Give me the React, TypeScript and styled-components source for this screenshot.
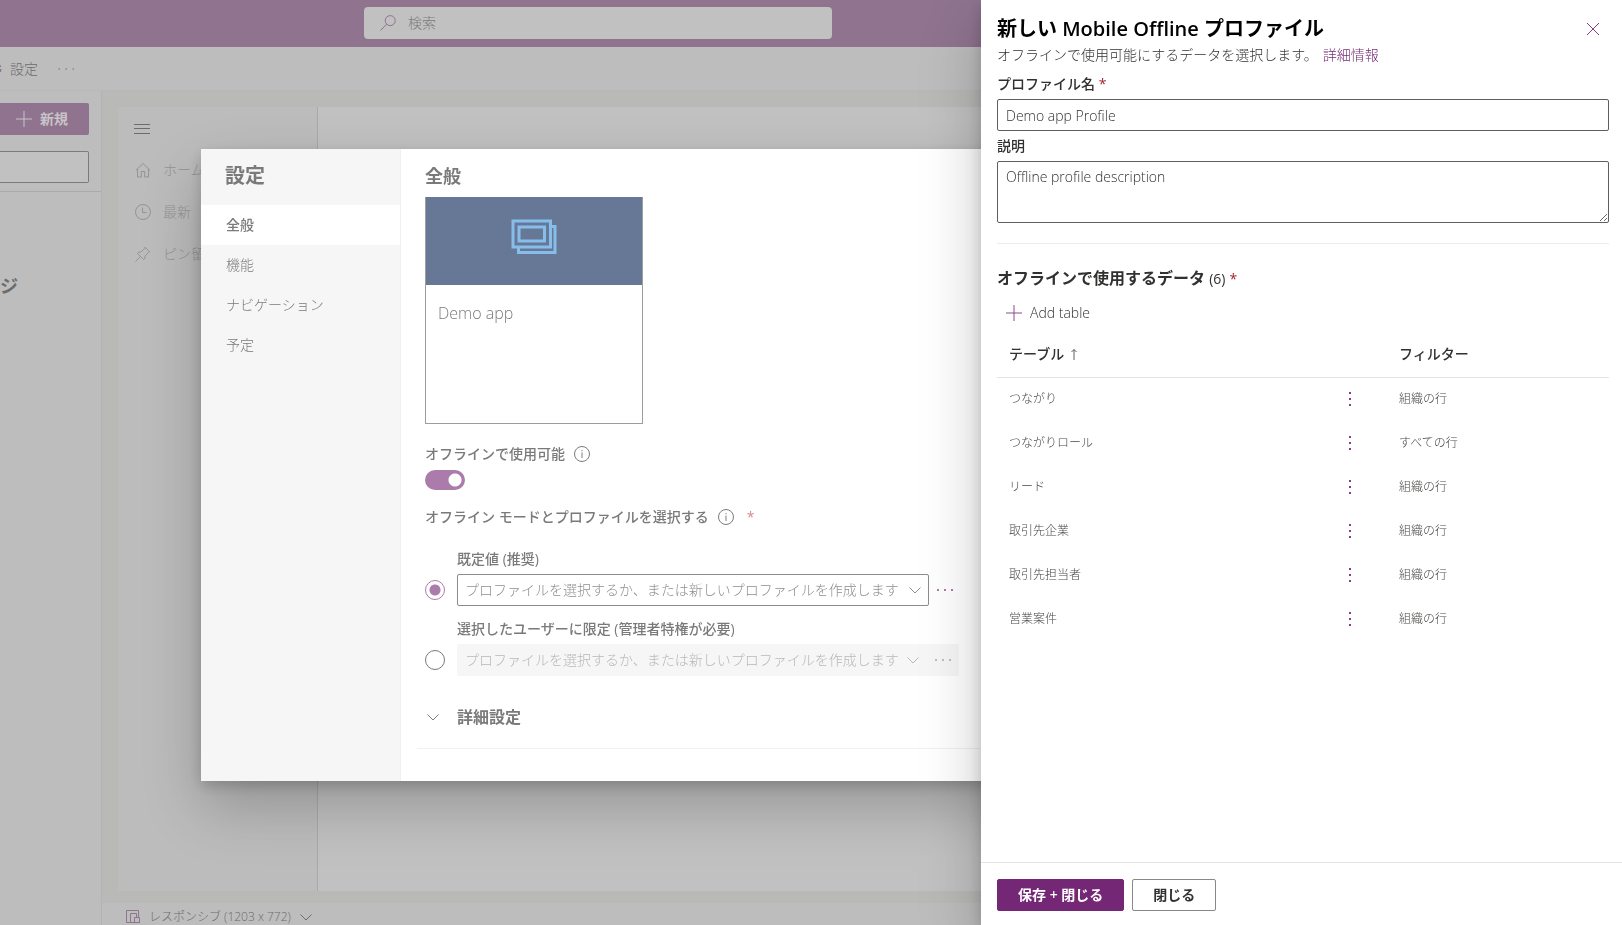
import React from "react";
import styled, { createGlobalStyle, css } from "styled-components";

const font = `"Open Sans", "Noto Sans CJK JP", sans-serif`;
const depth = "0 26px 58px rgba(0, 0, 0, 0.22), 0 5px 14px rgba(0, 0, 0, 0.18)";

const GlobalStyle = createGlobalStyle`
  *, *::before, *::after { box-sizing: border-box; }
  body { margin: 0; font-family: ${font}; font-size: 14px; font-weight: 300; line-height: 20px; color: #323130; overflow: hidden; }
  button, input, select, textarea { font: inherit; color: inherit; margin: 0; }
  button { cursor: pointer; }
  h1, h2, h3, p { margin: 0; }
`;

/* ---------- icons ---------- */

const Svg = styled.svg`
  display: block;
  flex: none;
  fill: none;
  stroke: currentColor;
`;

const SearchIcon = () => (
  <Svg width="16" height="16" viewBox="0 0 16 16">
    <circle cx="10.2" cy="5.6" r="5" />
    <path d="M6.6 9.2L.4 15.5" />
  </Svg>
);
const PlusIcon = () => (
  <Svg width="16" height="16" viewBox="0 0 16 16">
    <path d="M8 0v16M0 8h16" />
  </Svg>
);
const MenuIcon = () => (
  <Svg width="16" height="16" viewBox="0 0 16 16">
    <path d="M0 3.5h16M0 7.5h16M0 12.5h16" />
  </Svg>
);
const HomeIcon = () => (
  <Svg width="16" height="16" viewBox="0 0 16 16">
    <path d="M1 8.3L8 1.5l7 6.8M2.5 7v8h3.800V9.500h3.400V15h3.800V7" />
  </Svg>
);
const ClockIcon = () => (
  <Svg width="16" height="16" viewBox="0 0 16 16">
    <circle cx="8" cy="8" r="7.500" />
    <path d="M7.500 3.500v5h4" />
  </Svg>
);
const PinIcon = () => (
  <Svg width="16" height="16" viewBox="0 0 16 16">
    <path d="M10 1.200l4.800 4.800-1.300.5-3.300 3.300-.4 2.800-1.200 1L2.500 7.400l1-1.200 2.800-.4 3.300-3.300zM5.500 10.500L.5 15.500" />
  </Svg>
);
const DeviceIcon = () => (
  <Svg width="14" height="14" viewBox="0 0 14 14">
    <path d="M4.500 12.500h-4V.5h12v7M4.500 13V3.500h6v4M8.500 13V7.500h5V13M5 12.500h9" />
  </Svg>
);
const ChevronIcon = () => (
  <Svg width="12" height="12" viewBox="0 0 12 12">
    <path d="M.5 3.500L6 9l5.500-5.500" />
  </Svg>
);
const CloseIcon = () => (
  <Svg width="14" height="14" viewBox="0 0 14 14">
    <path d="M1 1l12 12M13 1L1 13" />
  </Svg>
);
const InfoIcon = () => (
  <Svg width="16" height="16" viewBox="0 0 16 16">
    <circle cx="8" cy="8" r="7.500" />
    <path d="M8 6.500V12M8 4v1.200" />
  </Svg>
);
const DotsIcon = () => (
  <Svg width="16" height="16" viewBox="0 0 16 16">
    <path d="M0 8h2M7 8h2M14 8h2" strokeWidth="2" />
  </Svg>
);
const VerticalDotsIcon = () => (
  <Svg width="16" height="16" viewBox="0 0 16 16">
    <path d="M8 1v2M8 7v2M8 13v2" strokeWidth="2" />
  </Svg>
);
const GearIcon = () => (
  <Svg width="16" height="16" viewBox="0 0 16 16">
    <circle cx="8" cy="8" r="2.500" />
    <circle cx="8" cy="8" r="6.500" strokeWidth="2" strokeDasharray="3 2" />
  </Svg>
);
const SortUpIcon = () => (
  <Svg width="8" height="14" viewBox="0 0 8 14">
    <path d="M4 13V2.500M1.500 5L4 2.500 6.500 5" />
  </Svg>
);
const AppTileIcon = () => (
  <Svg width="46" height="36" viewBox="0 0 46 36" strokeWidth="3">
    <path d="M2 2h37.500v26H2zM8 8h25.500v14H8zM39 7.500h5V33.500H7.500V28" />
  </Svg>
);

/* ---------- designer behind the dialogs ---------- */

const Shell = styled.div`
  height: 100vh;
  display: flex;
  flex-direction: column;
  overflow: hidden;
  background: #bdbdbd;
  color: #6c6c6c;
`;

const TopBar = styled.header`
  flex: none;
  height: 47px;
  padding: 7px 0 8px 364px;
  background: #8f738f;
`;

const SearchBox = styled.label`
  display: flex;
  align-items: center;
  gap: 12px;
  width: 468px;
  height: 32px;
  padding: 0 16px;
  border-radius: 4px;
  background: #c1c1c1;
  color: #8f738f;

  input {
    flex: 1;
    border: 0;
    padding: 0;
    background: none;
    outline: 0;
  }
  input::placeholder { color: #7c7c7c; opacity: 1; }
`;

const CommandBar = styled.div`
  flex: none;
  display: flex;
  align-items: center;
  gap: 20px;
  height: 44px;
  border-bottom: 1px solid #b8b8b8;
`;

const CommandButton = styled.button`
  display: flex;
  align-items: center;
  gap: 8px;
  border: 0;
  padding: 0;
  background: none;

  &:first-child { margin-left: -14px; }
  &:first-child svg { color: #8f738f; }
`;

const Workspace = styled.div`
  flex: 1;
  min-height: 0;
  display: flex;
`;

const PagesPane = styled.aside`
  flex: none;
  width: 102px;
  border-right: 1px solid #b3b3b3;
`;

const PagesTools = styled.div`
  display: flex;
  flex-direction: column;
  gap: 16px;
  padding: 12px 12px 8px 0;
  border-bottom: 1px solid #aaa;
`;

const NewButton = styled.button`
  display: flex;
  align-items: center;
  gap: 8px;
  height: 32px;
  border: 0;
  border-radius: 0 2px 2px 0;
  padding: 0 16px;
  background: #8f738f;
  color: #c8c4c8;
  font-weight: 600;
`;

const PagesFilter = styled.input`
  width: 100%;
  height: 32px;
  border: 1px solid #7b7b7b;
  border-left: 0;
  border-radius: 0 2px 2px 0;
  background: #c1c1c1;
`;

const PagesTitle = styled.h2`
  padding-top: 82px;
  font-size: 18px;
  line-height: 24px;
  font-weight: 600;
`;

const CanvasColumn = styled.main`
  flex: 1;
  min-width: 0;
  display: flex;
  flex-direction: column;
`;

const Canvas = styled.div`
  flex: 1;
  min-height: 0;
  display: flex;
  padding: 16px 16px 12px;
  background: #b9b9b7;
`;

const PreviewNav = styled.nav`
  flex: none;
  width: 200px;
  padding: 14px 16px;
  border-right: 1px solid #a9a9a9;
  background: #bcbcbc;
`;

const PreviewBody = styled.div`
  flex: 1;
  background: #c1c1c1;
`;

const PreviewLink = styled.a`
  display: flex;
  align-items: center;
  gap: 12px;
  height: 42px;
  padding-left: 1px;
  color: #949494;
  text-decoration: none;
`;

const MenuButton = styled.button`
  display: block;
  border: 0;
  padding: 0;
  margin-bottom: 12px;
  background: none;
`;

const StatusBar = styled.div`
  flex: none;
  height: 22px;
  padding: 5px 24px 0;
`;

const SizeButton = styled.button`
  display: flex;
  align-items: center;
  gap: 9px;
  border: 0;
  padding: 0;
  background: none;
  font-size: 12px;
  line-height: 17px;

  svg:first-child { color: #8f738f; }
`;

/* ---------- settings dialog ---------- */

const ModalLayer = styled.div`
  position: fixed;
  inset: 0;
  display: flex;
  align-items: center;
  justify-content: center;
  padding-top: 5px;
`;

const Modal = styled.section`
  display: flex;
  width: 1220px;
  height: 632px;
  border-radius: 2px;
  background: #fff;
  color: #7a7a7a;
  box-shadow: ${depth};
`;

const ModalNav = styled.nav`
  flex: none;
  width: 200px;
  border-right: 1px solid #f0f0f0;
  background: #f6f6f6;

  h2 {
    padding: 13px 24px 15px;
    font-size: 20px;
    line-height: 28px;
    font-weight: 600;
  }
`;

const ModalTab = styled.button<{ $active?: boolean }>`
  display: block;
  width: 100%;
  height: 40px;
  border: 0;
  padding: 0 25px;
  text-align: left;
  background: ${(p) => (p.$active ? "#fff" : "none")};
  font-weight: ${(p) => (p.$active ? 500 : 300)};
`;

const ModalBody = styled.div`
  flex: 1;
  padding: 13px 16px;

  h2 {
    padding: 0 8px;
    font-size: 18px;
    line-height: 28px;
    font-weight: 600;
  }
`;

const AppCard = styled.div`
  width: 218px;
  height: 227px;
  margin: 7px 8px 20px;
  border: 1px solid #9c9c9c;
  border-top: 0;
`;

const AppCardTop = styled.div`
  display: flex;
  justify-content: center;
  height: 88px;
  padding-top: 22px;
  background: #667896;
  color: #86bdea;
`;

const AppCardName = styled.p`
  padding: 18px 12px;
  font-size: 16px;
`;

const FieldTitle = styled.div`
  display: flex;
  align-items: center;
  gap: 9px;
  padding: 0 8px;
  font-weight: 500;
`;

const Required = styled.span`
  color: #a4262c;
  font-weight: 400;
`;

const DimRequired = styled(Required)`
  margin-left: 4px;
  color: #d58a8e;
`;

const Toggle = styled.input`
  appearance: none;
  display: block;
  width: 40px;
  height: 20px;
  margin: 6px 8px 17px;
  border-radius: 10px;
  background: radial-gradient(circle at 30px 10px, #fff 6px, #ab7cab 7px);
`;

const Choices = styled.div`
  display: grid;
  grid-template-columns: 20px auto;
  justify-content: start;
  align-items: start;
  column-gap: 12px;
  padding: 22px 8px 0;
`;

const ChoiceLabel = styled.label`
  grid-column: 2;
  padding: 0 0 5px;
  font-weight: 500;
`;

const Radio = styled.input`
  && { margin-top: 6px; }
  appearance: none;
  width: 20px;
  height: 20px;
  border: 1px solid #7a7a7a;
  border-radius: 50%;

  &:checked {
    border-color: #ab7cab;
    background: radial-gradient(circle, #ab7cab 5px, transparent 6px);
  }
`;

const Choice = styled.div<{ $off?: boolean }>`
  display: flex;
  align-items: center;
  width: 502px;
  height: 32px;
  margin-bottom: 13px;
  border-radius: 2px;
  color: #ab7cab;
  ${(p) =>
    p.$off &&
    css`
      background: #f6f6f6;
      color: #bdbdbd;
    `}
`;

const Combo = styled.span<{ $off?: boolean }>`
  position: relative;
  flex: none;
  width: ${(p) => (p.$off ? 470 : 472)}px;
  color: ${(p) => (p.$off ? "#b8b8b8" : "#8e8e8e")};

  select {
    appearance: none;
    display: block;
    width: 100%;
    height: 32px;
    border: 1px solid ${(p) => (p.$off ? "transparent" : "#8c8c8c")};
    border-radius: 2px;
    padding: 0 28px 0 7px;
    background: none;
    opacity: 1;
  }
  svg {
    position: absolute;
    right: 8px;
    top: 10px;
    pointer-events: none;
  }
`;

const MoreButton = styled.button`
  border: 0;
  padding: 0 8px;
  background: none;
`;

const Advanced = styled.button`
  display: flex;
  align-items: center;
  gap: 18px;
  width: 100%;
  border: 0;
  border-bottom: 1px solid #f0f0f0;
  padding: 17px 10px 20px;
  background: none;
  font-size: 16px;
  line-height: 22px;
  font-weight: 600;
`;

/* ---------- profile panel ---------- */

const Panel = styled.section`
  position: fixed;
  top: 0;
  right: 0;
  bottom: 0;
  display: flex;
  flex-direction: column;
  width: 641px;
  max-width: 100%;
  background: #fff;
  box-shadow: ${depth};
`;

const PanelBody = styled.div`
  flex: 1;
  min-height: 0;
  padding: 15px 13px 0 16px;
`;

const PanelHead = styled.div`
  display: flex;
  align-items: center;
  justify-content: space-between;

  h1 {
    font-size: 20px;
    line-height: 28px;
    font-weight: 600;
    color: #000;
  }
`;

const CloseButton = styled.button`
  border: 0;
  padding: 0 9px;
  background: none;
  color: #8b3a8b;
`;

const Intro = styled.p`
  padding: 2px 0 9px;

  a {
    margin-left: 5px;
    color: #742774;
    text-decoration: none;
  }
`;

const Label = styled.label`
  display: block;
  padding-bottom: 5px;
  font-weight: 500;
`;

const fieldBox = css`
  display: block;
  width: 100%;
  border: 1px solid #605e5c;
  border-radius: 2px;
  background: #fff;
`;

const TextField = styled.input`
  ${fieldBox}
  height: 32px;
  margin-bottom: 5px;
  padding: 0 8px;
`;

const TextArea = styled.textarea`
  ${fieldBox}
  height: 62px;
  padding: 5px 8px;
  resize: vertical;
`;

const DataSection = styled.div`
  margin-top: 20px;
  border-top: 1px solid #edebe9;
  padding-top: 23px;

  h2 {
    font-size: 16px;
    line-height: 22px;
    font-weight: 600;
  }
  h2 span { font-size: 14px; }
`;

const Count = styled.span`
  font-weight: 500;
`;

const AddButton = styled.button`
  display: flex;
  align-items: center;
  gap: 8px;
  margin-top: 13px;
  border: 0;
  padding: 0 9px;
  background: none;

  svg { color: #8b4a8b; }
`;

const DataTable = styled.table`
  width: 100%;
  margin-top: 9px;
  border-collapse: collapse;
  table-layout: fixed;
  text-align: left;

  th {
    height: 45px;
    border-bottom: 1px solid #e5e4e3;
    padding: 0 12px;
    font-weight: 500;
  }
  td {
    height: 44px;
    padding: 0 12px;
    font-size: 12px;
    line-height: 16px;
    color: #484644;
  }
`;

const NameCol = styled.col`
  width: 333px;
`;

const MenuCol = styled.col`
  width: 57px;
`;

const SortHead = styled.span`
  display: flex;
  align-items: center;
  gap: 6px;

  svg { color: #605e5c; }
`;

const RowMenu = styled.button`
  display: block;
  border: 0;
  padding: 0;
  background: none;
  color: #8b3a8b;
`;

const PanelFoot = styled.footer`
  flex: none;
  display: flex;
  gap: 8px;
  padding: 16px 16px 14px;
  border-top: 1px solid #e5e4e3;
`;

const ActionButton = styled.button<{ $primary?: boolean }>`
  height: 32px;
  border: 1px solid ${(p) => (p.$primary ? "#742774" : "#8a8886")};
  border-radius: 2px;
  padding: 0 20px;
  background: ${(p) => (p.$primary ? "#742774" : "#fff")};
  color: ${(p) => (p.$primary ? "#fff" : "#323130")};
  font-weight: 600;
`;

const rows = [
  ["つながり", "組織の行"],
  ["つながりロール", "すべての行"],
  ["リード", "組織の行"],
  ["取引先企業", "組織の行"],
  ["取引先担当者", "組織の行"],
  ["営業案件", "組織の行"],
];

const hint = "プロファイルを選択するか、または新しいプロファイルを作成します";

export default function App() {
  return (
    <>
      <GlobalStyle />
      <Shell>
        <TopBar>
          <SearchBox>
            <SearchIcon />
            <input type="text" aria-label="検索" placeholder="検索" />
          </SearchBox>
        </TopBar>
        <CommandBar>
          <CommandButton><GearIcon />設定</CommandButton>
          <CommandButton aria-label="その他"><SmallDots /></CommandButton>
        </CommandBar>
        <Workspace>
          <PagesPane>
            <PagesTools>
              <NewButton><PlusIcon />新規</NewButton>
              <PagesFilter type="text" aria-label="フィルター" />
            </PagesTools>
            <PagesTitle>ジ</PagesTitle>
          </PagesPane>
          <CanvasColumn>
            <Canvas>
              <PreviewNav>
                <MenuButton aria-label="メニュー"><MenuIcon /></MenuButton>
                <PreviewLink href="#home"><HomeIcon />ホーム</PreviewLink>
                <PreviewLink href="#recent"><ClockIcon />最新</PreviewLink>
                <PreviewLink href="#pinned"><PinIcon />ピン留め</PreviewLink>
              </PreviewNav>
              <PreviewBody />
            </Canvas>
            <StatusBar>
              <SizeButton><DeviceIcon />レスポンシブ (1203 x 772)<ChevronIcon /></SizeButton>
            </StatusBar>
          </CanvasColumn>
        </Workspace>
      </Shell>

      <ModalLayer>
        <Modal role="dialog" aria-label="設定">
          <ModalNav>
            <h2>設定</h2>
            <ModalTab $active>全般</ModalTab>
            <ModalTab>機能</ModalTab>
            <ModalTab>ナビゲーション</ModalTab>
            <ModalTab>予定</ModalTab>
          </ModalNav>
          <ModalBody>
            <h2>全般</h2>
            <AppCard>
              <AppCardTop><AppTileIcon /></AppCardTop>
              <AppCardName>Demo app</AppCardName>
            </AppCard>
            <FieldTitle><label htmlFor="offline">オフラインで使用可能</label><InfoIcon /></FieldTitle>
            <Toggle id="offline" type="checkbox" role="switch" defaultChecked />
            <FieldTitle>
              オフライン モードとプロファイルを選択する<InfoIcon />
              <DimRequired>*</DimRequired>
            </FieldTitle>
            <Choices>
              <ChoiceLabel htmlFor="mode-default">既定値 (推奨)</ChoiceLabel>
              <Radio id="mode-default" type="radio" name="mode" defaultChecked />
              <Choice>
                <Combo>
                  <select aria-label="既定値のプロファイル"><option>{hint}</option></select>
                  <ChevronIcon />
                </Combo>
                <MoreButton aria-label="その他"><DotsIcon /></MoreButton>
              </Choice>
              <ChoiceLabel htmlFor="mode-users">選択したユーザーに限定 (管理者特権が必要)</ChoiceLabel>
              <Radio id="mode-users" type="radio" name="mode" />
              <Choice $off>
                <Combo $off>
                  <select disabled aria-label="ユーザーのプロファイル"><option>{hint}</option></select>
                  <ChevronIcon />
                </Combo>
                <MoreButton disabled aria-label="その他"><DotsIcon /></MoreButton>
              </Choice>
            </Choices>
            <Advanced><ChevronIcon />詳細設定</Advanced>
          </ModalBody>
        </Modal>
      </ModalLayer>

      <Panel role="dialog" aria-label="新しい Mobile Offline プロファイル">
        <PanelBody>
          <PanelHead>
            <h1>新しい Mobile Offline プロファイル</h1>
            <CloseButton aria-label="閉じる"><CloseIcon /></CloseButton>
          </PanelHead>
          <Intro>
            オフラインで使用可能にするデータを選択します。<a href="#more">詳細情報</a>
          </Intro>
          <Label htmlFor="name">プロファイル名 <Required>*</Required></Label>
          <TextField id="name" type="text" defaultValue="Demo app Profile" />
          <Label htmlFor="description">説明</Label>
          <TextArea id="description" defaultValue="Offline profile description" />
          <DataSection>
            <h2>オフラインで使用するデータ <Count>(6)</Count> <Required>*</Required></h2>
            <AddButton><PlusIcon />Add table</AddButton>
            <DataTable>
              <colgroup>
                <NameCol />
                <MenuCol />
                <col />
              </colgroup>
              <thead>
                <tr>
                  <th colSpan={2}><SortHead>テーブル<SortUpIcon /></SortHead></th>
                  <th>フィルター</th>
                </tr>
              </thead>
              <tbody>
                {rows.map(([name, filter]) => (
                  <tr key={name}>
                    <td>{name}</td>
                    <td><RowMenu aria-label={`${name} のメニュー`}><VerticalDotsIcon /></RowMenu></td>
                    <td>{filter}</td>
                  </tr>
                ))}
              </tbody>
            </DataTable>
          </DataSection>
        </PanelBody>
        <PanelFoot>
          <ActionButton $primary>保存 + 閉じる</ActionButton>
          <ActionButton>閉じる</ActionButton>
        </PanelFoot>
      </Panel>
    </>
  );
}

function SmallDots() {
  return (
    <Svg width="16" height="16" viewBox="0 0 16 16">
      <path d="M.5 8H2M7.500 8H9M14.500 8H16" />
    </Svg>
  );
}
